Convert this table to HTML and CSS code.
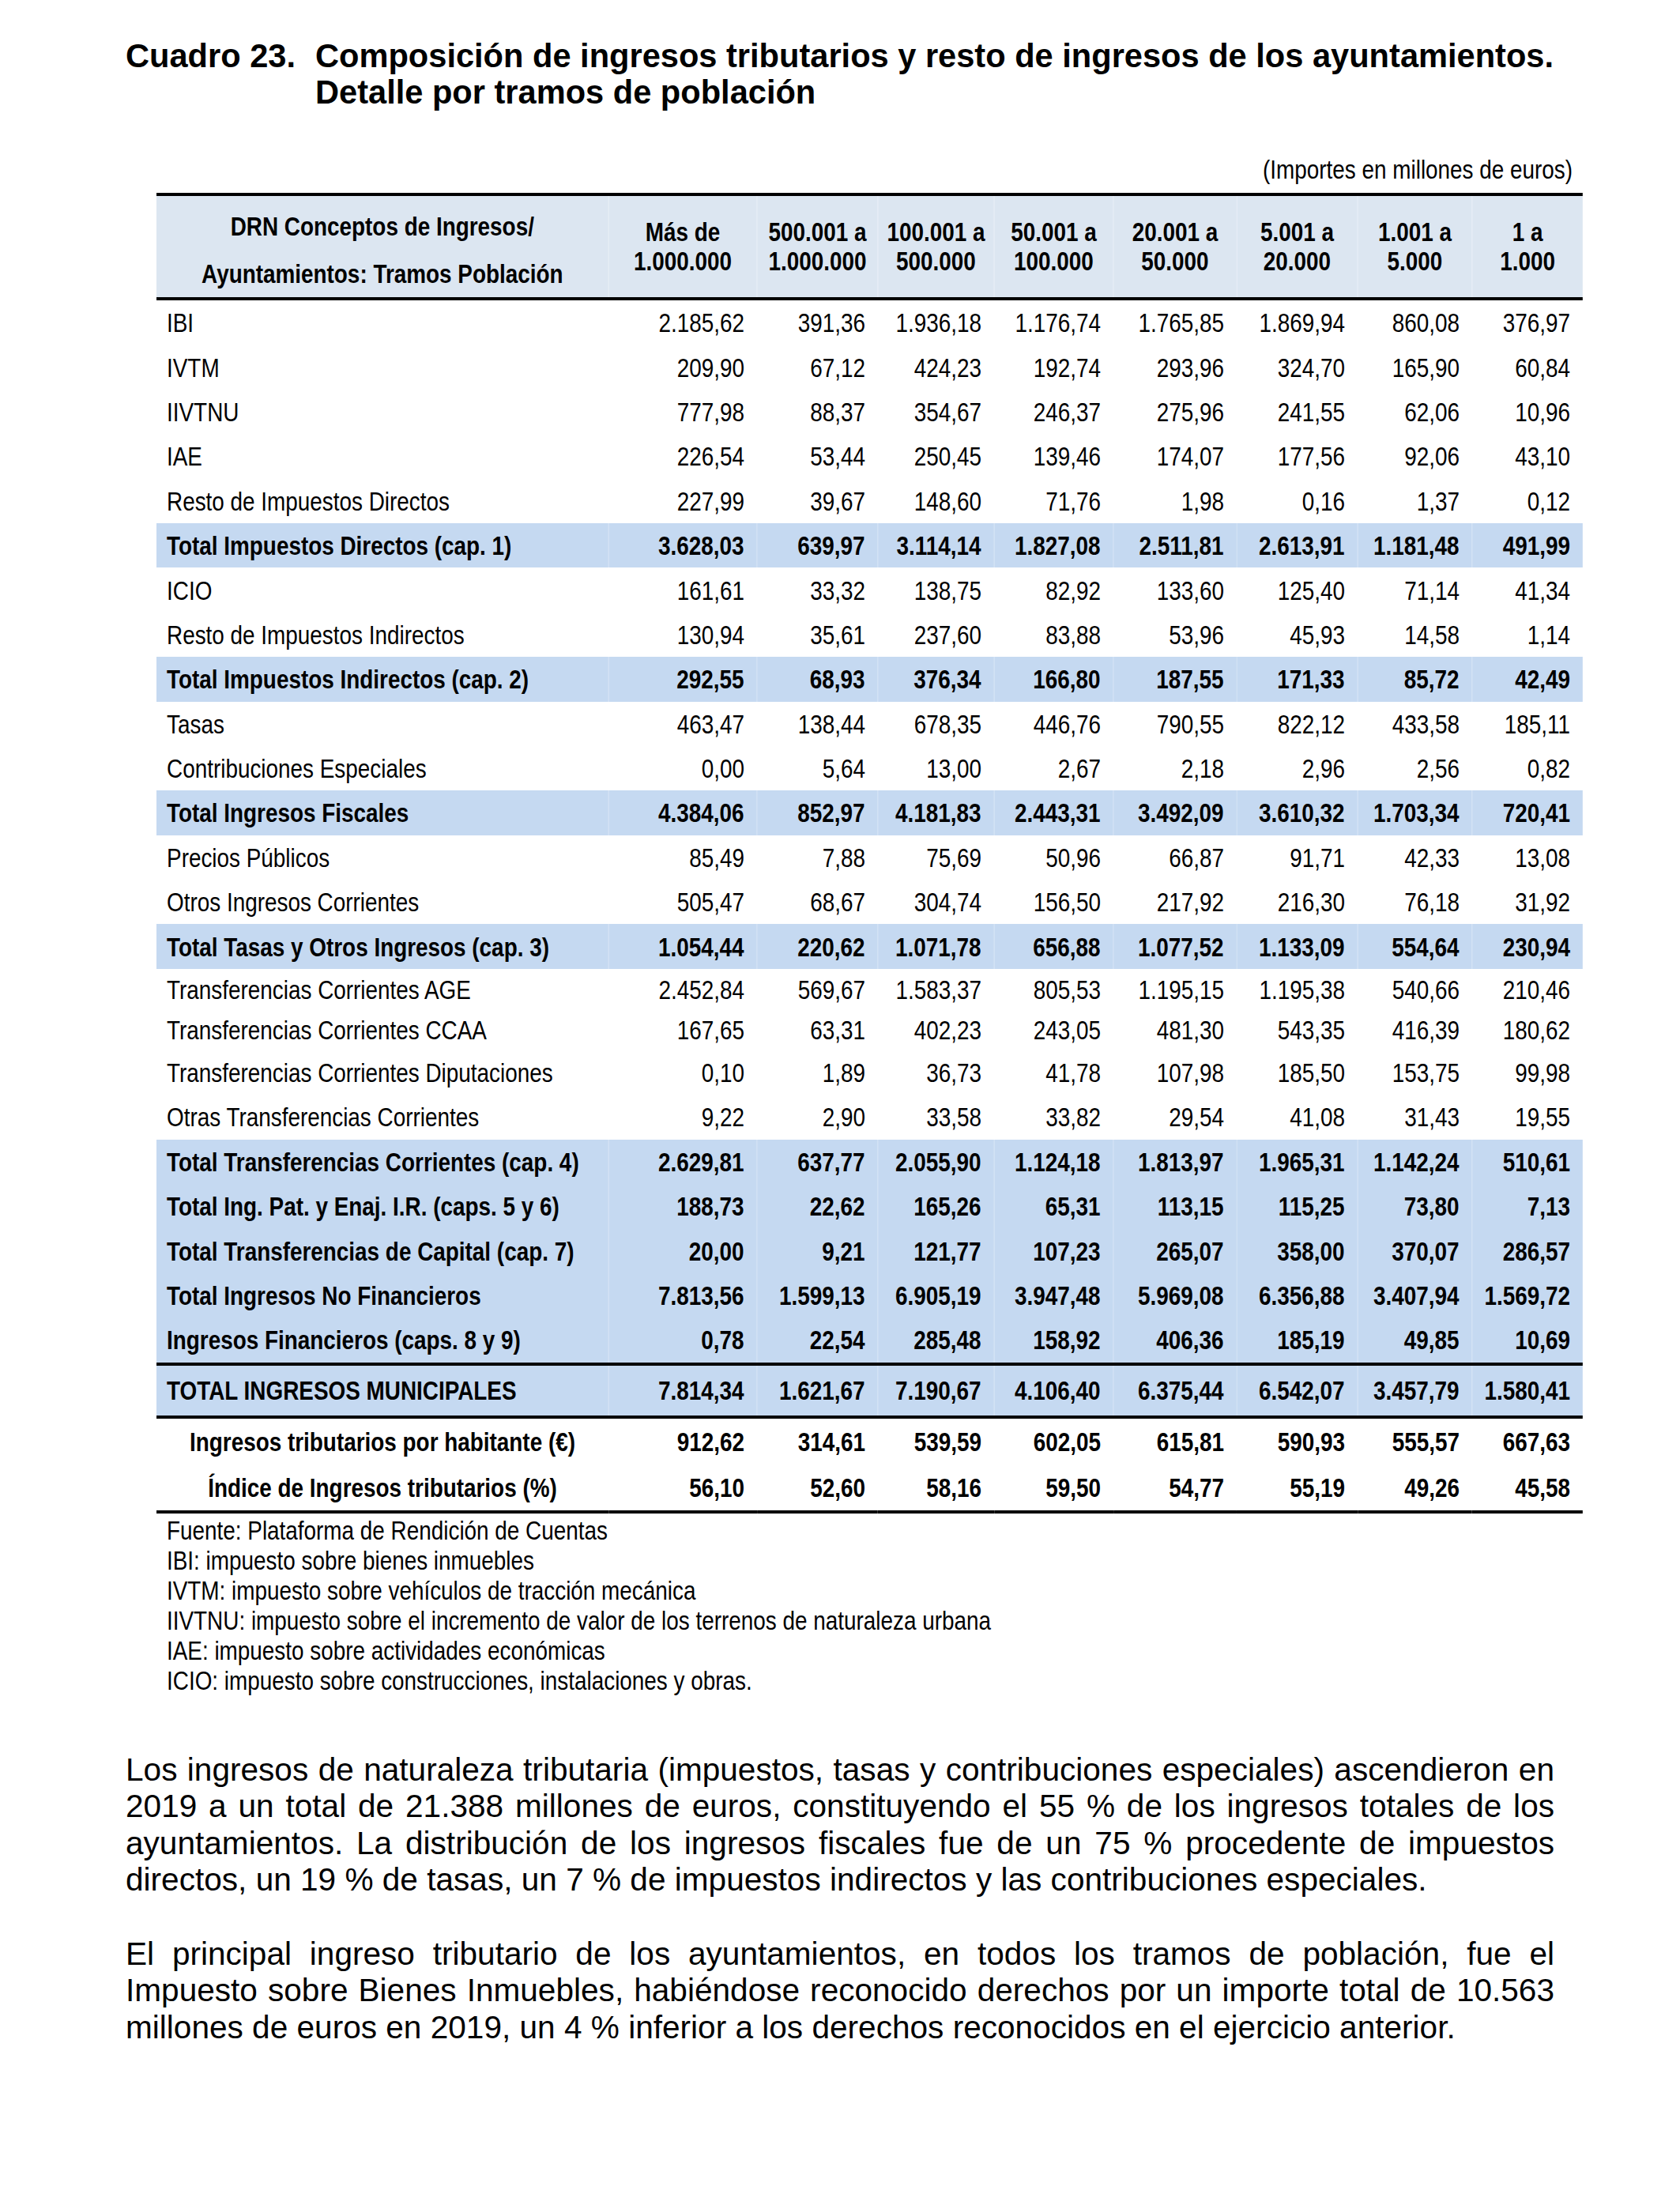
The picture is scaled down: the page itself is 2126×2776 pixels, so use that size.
FILE: index.html
```html
<!DOCTYPE html>
<html lang="es">
<head>
<meta charset="utf-8">
<title>Cuadro 23</title>
<link rel="stylesheet" href="styles.css">
</head>
<body>
<div class="page">
  <div class="title">
    <div class="title-num">Cuadro 23.</div>
    <div class="title-text">Composición de ingresos tributarios y resto de ingresos de los ayuntamientos.<br>Detalle por tramos de población</div>
  </div>

  <div class="units"><span class="units-text">(Importes en millones de euros)</span></div>

  <table class="data">
    <colgroup>
      <col class="c-label"><col class="c1"><col class="c2"><col class="c3"><col class="c4"><col class="c5"><col class="c6"><col class="c7"><col class="c8">
    </colgroup>
    <thead>
      <tr>
        <th class="h-label"><div class="hl1">DRN Conceptos de Ingresos/</div><div class="hl2">Ayuntamientos: Tramos Población</div></th>
        <th>Más de<br>1.000.000</th>
        <th>500.001 a<br>1.000.000</th>
        <th>100.001 a<br>500.000</th>
        <th>50.001 a<br>100.000</th>
        <th>20.001 a<br>50.000</th>
        <th>5.001 a<br>20.000</th>
        <th>1.001 a<br>5.000</th>
        <th>1 a<br>1.000</th>
      </tr>
    </thead>
    <tbody>
      <tr><td>IBI</td><td>2.185,62</td><td>391,36</td><td>1.936,18</td><td>1.176,74</td><td>1.765,85</td><td>1.869,94</td><td>860,08</td><td>376,97</td></tr>
      <tr><td>IVTM</td><td>209,90</td><td>67,12</td><td>424,23</td><td>192,74</td><td>293,96</td><td>324,70</td><td>165,90</td><td>60,84</td></tr>
      <tr><td>IIVTNU</td><td>777,98</td><td>88,37</td><td>354,67</td><td>246,37</td><td>275,96</td><td>241,55</td><td>62,06</td><td>10,96</td></tr>
      <tr><td>IAE</td><td>226,54</td><td>53,44</td><td>250,45</td><td>139,46</td><td>174,07</td><td>177,56</td><td>92,06</td><td>43,10</td></tr>
      <tr><td>Resto de Impuestos Directos</td><td>227,99</td><td>39,67</td><td>148,60</td><td>71,76</td><td>1,98</td><td>0,16</td><td>1,37</td><td>0,12</td></tr>
      <tr class="tot"><td>Total Impuestos Directos (cap. 1)</td><td>3.628,03</td><td>639,97</td><td>3.114,14</td><td>1.827,08</td><td>2.511,81</td><td>2.613,91</td><td>1.181,48</td><td>491,99</td></tr>
      <tr><td>ICIO</td><td>161,61</td><td>33,32</td><td>138,75</td><td>82,92</td><td>133,60</td><td>125,40</td><td>71,14</td><td>41,34</td></tr>
      <tr><td>Resto de Impuestos Indirectos</td><td>130,94</td><td>35,61</td><td>237,60</td><td>83,88</td><td>53,96</td><td>45,93</td><td>14,58</td><td>1,14</td></tr>
      <tr class="tot"><td>Total Impuestos Indirectos (cap. 2)</td><td>292,55</td><td>68,93</td><td>376,34</td><td>166,80</td><td>187,55</td><td>171,33</td><td>85,72</td><td>42,49</td></tr>
      <tr><td>Tasas</td><td>463,47</td><td>138,44</td><td>678,35</td><td>446,76</td><td>790,55</td><td>822,12</td><td>433,58</td><td>185,11</td></tr>
      <tr><td>Contribuciones Especiales</td><td>0,00</td><td>5,64</td><td>13,00</td><td>2,67</td><td>2,18</td><td>2,96</td><td>2,56</td><td>0,82</td></tr>
      <tr class="tot"><td>Total Ingresos Fiscales</td><td>4.384,06</td><td>852,97</td><td>4.181,83</td><td>2.443,31</td><td>3.492,09</td><td>3.610,32</td><td>1.703,34</td><td>720,41</td></tr>
      <tr><td>Precios Públicos</td><td>85,49</td><td>7,88</td><td>75,69</td><td>50,96</td><td>66,87</td><td>91,71</td><td>42,33</td><td>13,08</td></tr>
      <tr><td>Otros Ingresos Corrientes</td><td>505,47</td><td>68,67</td><td>304,74</td><td>156,50</td><td>217,92</td><td>216,30</td><td>76,18</td><td>31,92</td></tr>
      <tr class="tot"><td>Total Tasas y Otros Ingresos (cap. 3)</td><td>1.054,44</td><td>220,62</td><td>1.071,78</td><td>656,88</td><td>1.077,52</td><td>1.133,09</td><td>554,64</td><td>230,94</td></tr>
      <tr class="short"><td>Transferencias Corrientes AGE</td><td>2.452,84</td><td>569,67</td><td>1.583,37</td><td>805,53</td><td>1.195,15</td><td>1.195,38</td><td>540,66</td><td>210,46</td></tr>
      <tr class="short"><td>Transferencias Corrientes CCAA</td><td>167,65</td><td>63,31</td><td>402,23</td><td>243,05</td><td>481,30</td><td>543,35</td><td>416,39</td><td>180,62</td></tr>
      <tr><td>Transferencias Corrientes Diputaciones</td><td>0,10</td><td>1,89</td><td>36,73</td><td>41,78</td><td>107,98</td><td>185,50</td><td>153,75</td><td>99,98</td></tr>
      <tr><td>Otras Transferencias Corrientes</td><td>9,22</td><td>2,90</td><td>33,58</td><td>33,82</td><td>29,54</td><td>41,08</td><td>31,43</td><td>19,55</td></tr>
      <tr class="tot"><td>Total Transferencias Corrientes (cap. 4)</td><td>2.629,81</td><td>637,77</td><td>2.055,90</td><td>1.124,18</td><td>1.813,97</td><td>1.965,31</td><td>1.142,24</td><td>510,61</td></tr>
      <tr class="tot"><td>Total Ing. Pat. y Enaj. I.R. (caps. 5 y 6)</td><td>188,73</td><td>22,62</td><td>165,26</td><td>65,31</td><td>113,15</td><td>115,25</td><td>73,80</td><td>7,13</td></tr>
      <tr class="tot"><td>Total Transferencias de Capital (cap. 7)</td><td>20,00</td><td>9,21</td><td>121,77</td><td>107,23</td><td>265,07</td><td>358,00</td><td>370,07</td><td>286,57</td></tr>
      <tr class="tot"><td>Total Ingresos No Financieros</td><td>7.813,56</td><td>1.599,13</td><td>6.905,19</td><td>3.947,48</td><td>5.969,08</td><td>6.356,88</td><td>3.407,94</td><td>1.569,72</td></tr>
      <tr class="tot"><td>Ingresos Financieros (caps. 8 y 9)</td><td>0,78</td><td>22,54</td><td>285,48</td><td>158,92</td><td>406,36</td><td>185,19</td><td>49,85</td><td>10,69</td></tr>
      <tr class="tot grand"><td>TOTAL INGRESOS MUNICIPALES</td><td>7.814,34</td><td>1.621,67</td><td>7.190,67</td><td>4.106,40</td><td>6.375,44</td><td>6.542,07</td><td>3.457,79</td><td>1.580,41</td></tr>
      <tr class="ratio first"><td>Ingresos tributarios por habitante (€)</td><td>912,62</td><td>314,61</td><td>539,59</td><td>602,05</td><td>615,81</td><td>590,93</td><td>555,57</td><td>667,63</td></tr>
      <tr class="ratio last"><td>Índice de Ingresos tributarios (%)</td><td>56,10</td><td>52,60</td><td>58,16</td><td>59,50</td><td>54,77</td><td>55,19</td><td>49,26</td><td>45,58</td></tr>
    </tbody>
  </table>

  <div class="notes">
    <div>Fuente: Plataforma de Rendición de Cuentas</div>
    <div>IBI: impuesto sobre bienes inmuebles</div>
    <div>IVTM: impuesto sobre vehículos de tracción mecánica</div>
    <div>IIVTNU: impuesto sobre el incremento de valor de los terrenos de naturaleza urbana</div>
    <div>IAE: impuesto sobre actividades económicas</div>
    <div>ICIO: impuesto sobre construcciones, instalaciones y obras.</div>
  </div>

  <p class="para">Los ingresos de naturaleza tributaria (impuestos, tasas y contribuciones especiales) ascendieron en 2019 a un total de 21.388 millones de euros, constituyendo el 55 % de los ingresos totales de los ayuntamientos. La distribución de los ingresos fiscales fue de un 75 % procedente de impuestos directos, un 19 % de tasas, un 7 % de impuestos indirectos y las contribuciones especiales.</p>

  <p class="para">El principal ingreso tributario de los ayuntamientos, en todos los tramos de población, fue el Impuesto sobre Bienes Inmuebles, habiéndose reconocido derechos por un importe total de 10.563 millones de euros en 2019, un 4 % inferior a los derechos reconocidos en el ejercicio anterior.</p>
</div>
</body>
</html>
```

FILE: styles.css
```css
html, body {
  margin: 0;
  padding: 0;
  background: #ffffff;
  color: #000000;
}

body {
  font-family: "Liberation Sans", Arial, sans-serif;
  overflow-x: hidden;
}

.page {
  width: 1808px;
  margin-left: 159px;
  padding-top: 48px;
}

.title {
  display: flex;
  font-weight: bold;
  font-size: 41.6px;
  line-height: 46px;
}

.title-num {
  flex: 0 0 240px;
}

.title-text {
  flex: 1 1 auto;
  white-space: nowrap;
}

/* Narrow (Arial Narrow-like) text: Liberation Sans squeezed horizontally */
.units,
.data,
.notes {
  font-family: "Liberation Sans", Arial, sans-serif;
  font-size: 34px;
}

.units {
  width: 1805px;
  margin-left: 39px;
  margin-top: 55px;
  box-sizing: border-box;
  padding-right: 13px;
  text-align: right;
  line-height: 38px;
  white-space: nowrap;
}

.units-text {
  display: inline-block;
  transform: scaleX(0.82);
  transform-origin: right center;
}

.data {
  width: 2201.2px;
  margin-left: 39px;
  margin-top: 11px;
  border-collapse: collapse;
  table-layout: fixed;
  transform: scaleX(0.82);
  transform-origin: left top;
}

.c-label { width: 697.56px; }
.c1 { width: 229.27px; }
.c2 { width: 186.59px; }
.c3 { width: 179.27px; }
.c4 { width: 184.15px; }
.c5 { width: 190.24px; }
.c6 { width: 186.59px; }
.c7 { width: 176.83px; }
.c8 { width: 170.73px; }

.data thead tr {
  border-top: 4px solid #000;
  border-bottom: 4px solid #000;
  background: #dce6f1;
}

.data th {
  height: 121px;
  padding: 0;
  font-weight: bold;
  line-height: 37px;
  text-align: center;
  vertical-align: middle;
  border-left: 1px solid #e8eef7;
}

.data th:first-child {
  border-left: none;
}

.data th.h-label {
  line-height: 60px;
  padding-top: 8px;
  box-sizing: border-box;
}

.data td {
  height: 56.4px;
  padding: 0 19.5px 0 0;
  text-align: right;
  vertical-align: middle;
  line-height: 38px;
  white-space: nowrap;
}

.data td:first-child {
  text-align: left;
  padding: 0 0 0 15.9px;
}

.data tr.short td {
  height: 51.5px;
}

.data tr.tot td {
  background: #c5d9f1;
  font-weight: bold;
  border-left: 1px solid #d5e3f5;
}

.data tr.tot td:first-child {
  border-left: none;
}

.data tr.grand {
  border-top: 4px solid #000;
  border-bottom: 4px solid #000;
}

.data tr.grand td {
  height: 63px;
}

.data tr.ratio td {
  font-weight: bold;
  height: 58px;
}

.data tr.ratio td:first-child {
  text-align: center;
  padding: 0;
}

.data tr.last {
  border-bottom: 4px solid #000;
}

.notes {
  width: 1600px;
  margin-left: 52px;
  margin-top: 2px;
  line-height: 38px;
  white-space: nowrap;
  transform: scaleX(0.82);
  transform-origin: left top;
}

.para {
  font-size: 40.6px;
  line-height: 46.6px;
  text-align: justify;
  margin: 0 0 46.6px 0;
}

.notes + .para {
  margin-top: 71px;
}
```
